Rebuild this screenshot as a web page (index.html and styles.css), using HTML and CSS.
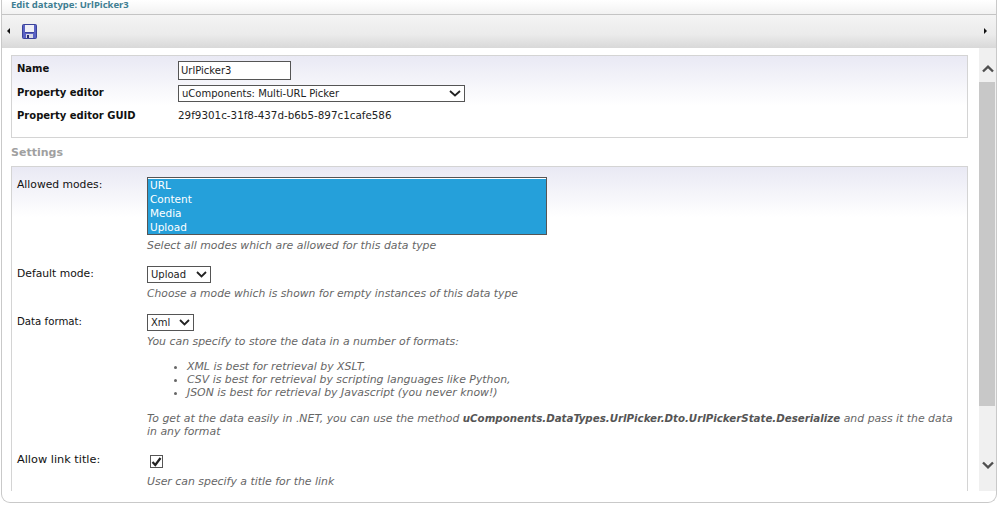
FILE: index.html
```html
<!DOCTYPE html>
<html lang="en">
<head>
<meta charset="utf-8">
<title>Edit datatype: UrlPicker3</title>
<link rel="stylesheet" href="styles.css">
</head>
<body>
<div class="app">
  <div class="titlebar">Edit datatype: UrlPicker3</div>
  <div class="toolbar">
    <span class="tri tri-left"></span>
    <svg class="save" width="15" height="15" viewBox="0 0 15 15">
      <rect x="0.5" y="0.5" width="14" height="14" rx="1" fill="#5a62c4" stroke="#3a4299"/>
      <rect x="3" y="1" width="9" height="7" fill="#f0f0f6"/>
      <rect x="3" y="8" width="9" height="1" fill="#3a4299"/>
      <rect x="4" y="10" width="7" height="4" fill="#d8d8e6"/>
      <rect x="5" y="11" width="2" height="3" fill="#2a2f70"/>
    </svg>
    <span class="tri tri-right"></span>
  </div>
  <div class="main">
    <div class="content">
      <div class="panel panel-top">
        <div class="prop prop-name">
          <div class="prop-label">Name</div>
          <input class="text-input" type="text" value="UrlPicker3">
        </div>
        <div class="prop prop-editor">
          <div class="prop-label">Property editor</div>
          <div class="select-wrap">
            <select class="sel sel-editor"><option>uComponents: Multi-URL Picker</option></select>
            <svg class="chev" width="12" height="7" viewBox="0 0 12 7"><path d="M1 1l5 4.500L11 1" fill="none" stroke="#222" stroke-width="1.800"/></svg>
          </div>
        </div>
        <div class="prop prop-guid">
          <div class="prop-label">Property editor GUID</div>
          <div class="guid">29f9301c-31f8-437d-b6b5-897c1cafe586</div>
        </div>
      </div>
      <h2 class="section">Settings</h2>
      <div class="panel panel-settings">
        <div class="row row-modes">
          <div class="row-label">Allowed modes:</div>
          <div class="row-field">
            <select class="multi" multiple size="4">
              <option selected>URL</option>
              <option selected>Content</option>
              <option selected>Media</option>
              <option selected>Upload</option>
            </select>
            <div class="help">Select all modes which are allowed for this data type</div>
          </div>
        </div>
        <div class="row row-default">
          <div class="row-label">Default mode:</div>
          <div class="row-field">
            <div class="select-wrap">
              <select class="sel sel-default"><option>Upload</option></select>
              <svg class="chev" width="11" height="7" viewBox="0 0 11 7"><path d="M1 1l4.500 4.500L10 1" fill="none" stroke="#222" stroke-width="1.800"/></svg>
            </div>
            <div class="help help-default">Choose a mode which is shown for empty instances of this data type</div>
          </div>
        </div>
        <div class="row row-format">
          <div class="row-label label-format">Data format:</div>
          <div class="row-field">
            <div class="select-wrap">
              <select class="sel sel-format"><option>Xml</option></select>
              <svg class="chev" width="11" height="7" viewBox="0 0 11 7"><path d="M1 1l4.500 4.500L10 1" fill="none" stroke="#222" stroke-width="1.800"/></svg>
            </div>
            <div class="help">
              <p class="help-p">You can specify to store the data in a number of formats:</p>
              <ul class="help-list">
                <li>XML is best for retrieval by XSLT,</li>
                <li>CSV is best for retrieval by scripting languages like Python,</li>
                <li>JSON is best for retrieval by Javascript (you never know!)</li>
              </ul>
              <p class="help-p">To get at the data easily in .NET, you can use the method <b>uComponents.DataTypes.UrlPicker.Dto.UrlPickerState.Deserialize</b> and pass it the data in any format</p>
            </div>
          </div>
        </div>
        <div class="row row-title">
          <div class="row-label label-title">Allow link title:</div>
          <div class="row-field">
            <div class="check-wrap">
              <input class="check" type="checkbox" checked>
              <svg class="tick" width="11" height="10" viewBox="0 0 11 10"><path d="M1.500 5l2.800 3L9.500 1" fill="none" stroke="#222" stroke-width="2.200"/></svg>
            </div>
            <div class="help">User can specify a title for the link</div>
          </div>
        </div>
      </div>
    </div>
    <div class="scrollbar">
      <div class="scroll-btn">
        <svg width="12" height="8" viewBox="0 0 12 8"><path d="M1 6.500l5-4.800 5 4.800" fill="none" stroke="#505050" stroke-width="2.400"/></svg>
      </div>
      <div class="thumb"></div>
      <div class="scroll-rest">
        <svg width="12" height="8" viewBox="0 0 12 8"><path d="M1 1.500l5 4.800 5-4.800" fill="none" stroke="#505050" stroke-width="2.400"/></svg>
      </div>
    </div>
  </div>
</div>
</body>
</html>
```
FILE: styles.css
```css
* { box-sizing: border-box; }
html, body { margin: 0; padding: 0; background: #fff; overflow: hidden; }
body {
  width: 1002px;
  height: 515px;
  font-family: "DejaVu Sans", Verdana, sans-serif;
  font-size: 11px;
  color: #111;
}
.app {
  width: 996px;
  height: 503px;
  margin-left: 1px;
  border: 1px solid #c9c9c9;
  border-top: 0;
  border-radius: 0 0 9px 9px;
  overflow: hidden;
  background: #fff;
  display: flex;
  flex-direction: column;
}
.titlebar {
  height: 15px;
  padding-left: 9px;
  font-family: "Noto Sans", sans-serif;
  font-size: 9.500px;
  font-weight: bold;
  line-height: 10px;
  color: #3f7f93;
  background: linear-gradient(#ffffff, #f2f2f2);
  border-bottom: 1px solid #c4c4c4;
}
.toolbar {
  height: 33px;
  flex: none;
  display: flex;
  align-items: center;
  padding: 0 9px 1px 5px;
  background: linear-gradient(#f4f4f4, #ebebeb 60%, #d8d8d8);
}
.tri { width: 0; height: 0; border-style: solid; border-color: transparent; }
.tri-left { border-width: 3px 3px 3px 0; border-right-color: #111; }
.tri-right { border-width: 3px 0 3px 3px; border-left-color: #111; margin-left: auto; }
.save { margin-left: 12px; }
.main { flex: 1; min-height: 0; display: flex; }
.content {
  flex: 1;
  min-width: 0;
  height: 443px;
  overflow: hidden;
  padding: 7px 10px 0 9px;
}
.panel {
  border: 1px solid #d4d4d4;
  background: linear-gradient(#e9e9f4, #ffffff 50px);
}
.panel-top { height: 83px; width: 957px; padding-top: 5px; }
.prop { display: flex; padding-left: 5px; }
.prop-label { width: 161px; padding-top: 1px; font-weight: bold; font-size: 10px; line-height: 14px; }
.prop-name { height: 24px; }
.prop-editor { height: 23px; }
.text-input {
  width: 113px;
  height: 19px;
  border: 1px solid #555;
  background: #fff;
  padding: 0 2px;
  font: 10px "DejaVu Sans", sans-serif;
  color: #222;
}
.select-wrap { position: relative; display: inline-block; vertical-align: top; }
.sel {
  display: block;
  appearance: none;
  -webkit-appearance: none;
  height: 17px;
  border: 1px solid #555;
  background: #fff;
  border-radius: 0;
  padding: 0 0 0 3px;
  font: 10px "DejaVu Sans", sans-serif;
  color: #222;
}
.chev { position: absolute; right: 4px; top: 5px; }
.sel-editor { width: 287px; }
.sel-default { width: 64px; }
.sel-format { width: 47px; }
.guid { font-size: 10.350px; line-height: 14px; color: #222; }
.section {
  margin: 0;
  padding-top: 8px;
  height: 28px;
  font-size: 11px;
  font-weight: bold;
  line-height: 14px;
  color: #a0a0a0;
}
.panel-settings { width: 957px; height: 340px; border-bottom: 0; padding-top: 10px; }
.row { display: flex; padding-left: 5px; }
.row-label { width: 130px; margin-top: 1px; font-size: 10.750px; line-height: 14px; color: #111; }
.label-format { font-size: 10.200px; }
.label-title { margin-top: -2px; font-size: 11.300px; }
.row-field { flex: 1; min-width: 0; }
.multi {
  display: block;
  width: 400px;
  height: 58px;
  border: 1px solid #555;
  border-radius: 0;
  background: #fff;
  padding: 1px 0 0;
  margin: 0;
  overflow: hidden;
  font: 10.500px "DejaVu Sans", sans-serif;
}
.multi option {
  height: 14px;
  min-height: 14px;
  line-height: 14px;
  padding: 0 2px;
  color: #fff;
  background: #25a0da linear-gradient(#25a0da, #25a0da);
}
.help {
  font-style: italic;
  font-size: 10.900px;
  line-height: 13px;
  color: #666;
  margin-top: 4px;
  width: 812px;
}
.help-default { font-size: 10.750px; }
.help b { font-weight: bold; font-size: 10.250px; color: #555; }
.row-modes { height: 89px; }
.row-default { height: 48px; }
.row-format { height: 141px; }
.help-p { margin: 0; }
.help-list { margin: 12px 0 13px; padding-left: 40px; }
.check-wrap { position: relative; width: 13px; height: 13px; margin: 0 0 0 3px; }
.check {
  display: block;
  appearance: none;
  -webkit-appearance: none;
  width: 13px;
  height: 13px;
  margin: 0;
  border: 1px solid #555;
  background: #fff;
}
.tick { position: absolute; left: 1px; top: 2px; }
.row-title .help { margin-top: 7px; }
.scrollbar {
  width: 17px;
  flex: none;
  height: 443px;
  display: flex;
  flex-direction: column;
  align-items: center;
  background: #f0f0f0;
}
.scroll-btn { height: 34px; padding-top: 17px; flex: none; }
.scroll-btn svg, .scroll-rest svg { display: block; }
.thumb { width: 16px; height: 324px; background: #c8c8c8; flex: none; align-self: flex-start; }
.scroll-rest { flex: 1; padding-top: 55px; }
```
